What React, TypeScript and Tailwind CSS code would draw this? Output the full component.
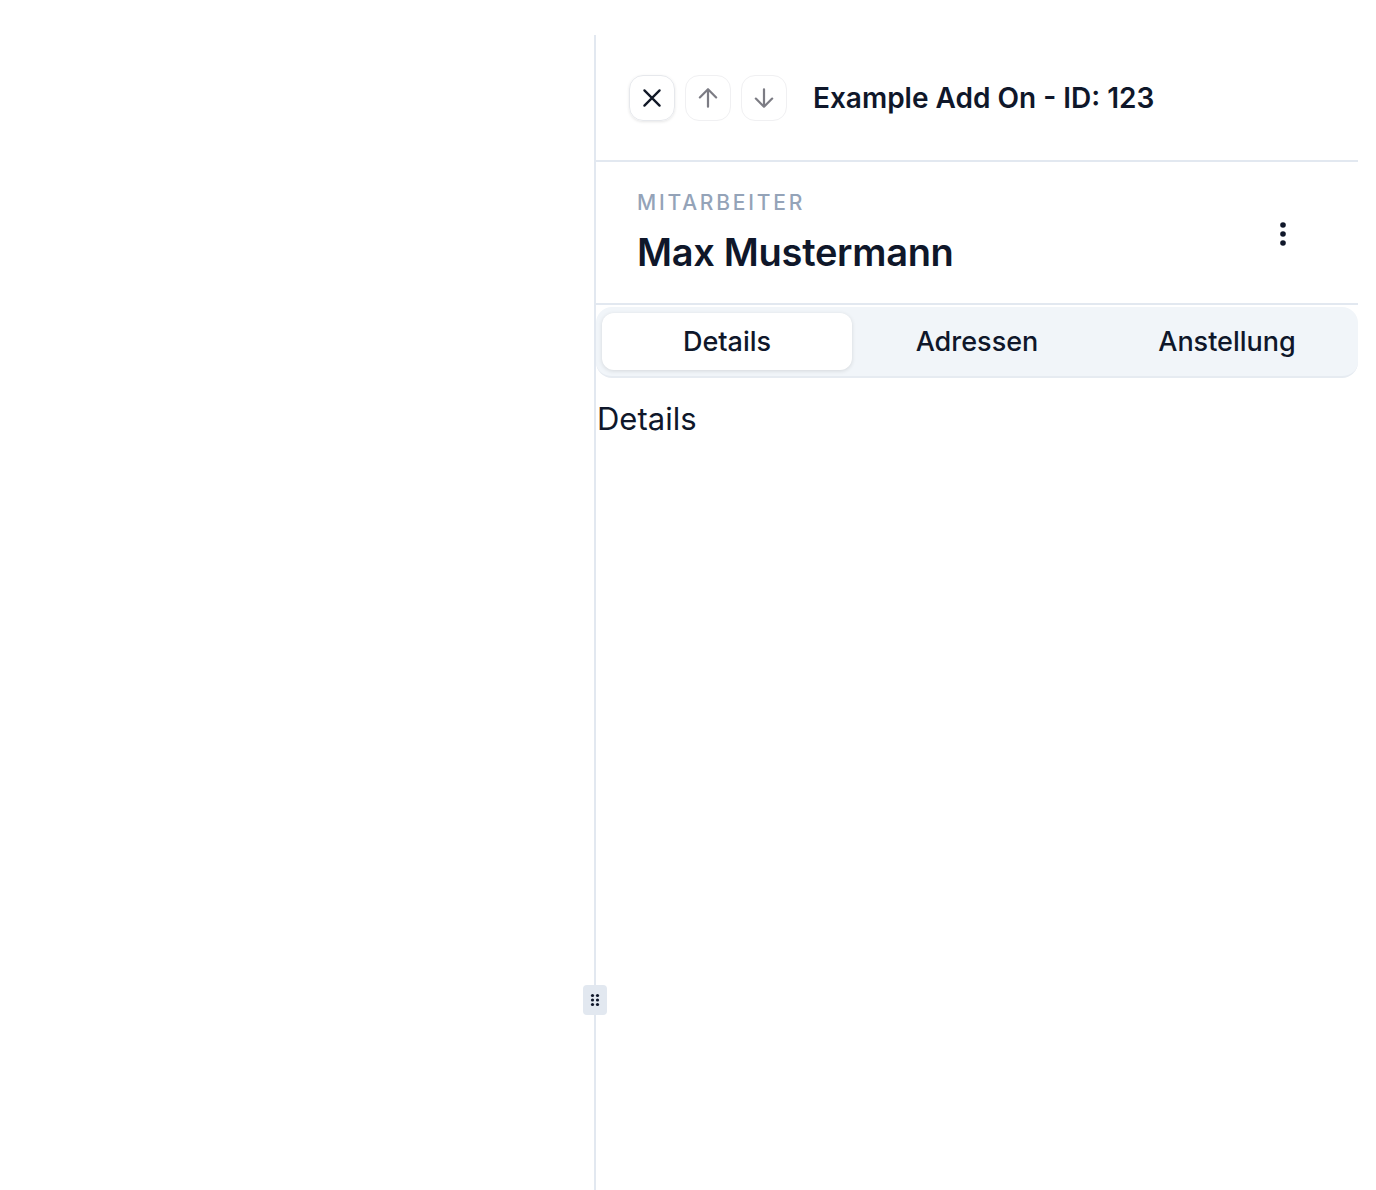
import React from "react";

function XIcon() {
  return (
    <svg width="28" height="28" viewBox="0 0 24 24" fill="none" stroke="#111827" strokeWidth="2" strokeLinecap="round">
      <path d="M5.5 5.5l13 13M18.5 5.5l-13 13" />
    </svg>
  );
}
function ArrowUp() {
  return (
    <svg width="28" height="28" viewBox="0 0 24 24" fill="none" stroke="#7c7c84" strokeWidth="1.9" strokeLinecap="round" strokeLinejoin="round">
      <path d="M12 19.5V4.5M5 11.5l7-7 7 7" />
    </svg>
  );
}
function ArrowDown() {
  return (
    <svg width="28" height="28" viewBox="0 0 24 24" fill="none" stroke="#7c7c84" strokeWidth="1.9" strokeLinecap="round" strokeLinejoin="round">
      <path d="M12 4.5v15M19 12.5l-7 7-7-7" />
    </svg>
  );
}

export default function App() {
  return (
    <div className="w-[1376px] h-[1190px] bg-white flex pt-[35px]" style={{ fontFamily: "Inter, 'Noto Sans', sans-serif" }}>
      <div className="w-[594px] shrink-0" />
      <div className="relative w-[764px] border-l-2 border-[#e2e8f0] flex flex-col">
        <div className="h-[127px] border-b-2 border-[#e2e8f0] flex items-center pl-[33px] pt-[1px]">
          <div className="flex gap-[10px]">
            <button className="w-[46px] h-[46px] rounded-[14px] border border-[#e6e8ec] shadow-[0_1px_3px_rgba(0,0,0,0.10)] flex items-center justify-center">
              <XIcon />
            </button>
            <button className="w-[46px] h-[46px] rounded-[14px] border border-[#f0f0f2] flex items-center justify-center">
              <ArrowUp />
            </button>
            <button className="w-[46px] h-[46px] rounded-[14px] border border-[#f0f0f2] flex items-center justify-center">
              <ArrowDown />
            </button>
          </div>
          <div className="ml-[26px] text-[28px] font-semibold text-[#0f172a]">Example Add On - ID: 123</div>
        </div>
        <div className="h-[143px] border-b-2 border-[#e2e8f0] flex items-center justify-between pl-[41px] pr-[71px]">
          <div className="flex flex-col">
            <div className="text-[21px] font-medium text-[#94a3b8] tracking-[2.8px] leading-[28px] mt-[0px]">MITARBEITER</div>
            <div className="text-[38px] font-semibold text-[#0f172a] leading-[50px] tracking-[-0.3px] mt-[10px]">Max Mustermann</div>
          </div>
          <svg width="8" height="26" viewBox="0 0 8 26" fill="#0f172a" className="mt-[2px]">
            <circle cx="4" cy="4" r="2.8" />
            <circle cx="4" cy="13" r="2.8" />
            <circle cx="4" cy="22" r="2.8" />
          </svg>
        </div>
        <div className="mt-[2px] h-[71px] bg-[#f1f5f9] rounded-[16px] border-b-2 border-[#e6ebf1] grid grid-cols-3 p-[6px]">
          <div className="bg-white rounded-[12px] shadow-[0_1px_4px_rgba(0,0,0,0.12)] flex items-center justify-center text-[27px] font-medium text-[#0f172a] pt-[1px]">Details</div>
          <div className="flex items-center justify-center text-[27px] font-medium text-[#0f172a] pt-[1px]">Adressen</div>
          <div className="flex items-center justify-center text-[27px] font-medium text-[#0f172a] pt-[1px]">Anstellung</div>
        </div>
        <div className="pl-[1px] mt-[19px] text-[31px] text-[#0f172a] leading-[44px]">Details</div>
        <div className="absolute left-[-13px] top-[950px] w-[24px] h-[30px] bg-[#e2e8f0] rounded-[4px] flex items-center justify-center">
          <svg width="10" height="14" viewBox="0 0 10 14" fill="#0f172a">
            <circle cx="2.5" cy="2.5" r="1.6" />
            <circle cx="7.5" cy="2.5" r="1.6" />
            <circle cx="2.5" cy="7" r="1.6" />
            <circle cx="7.5" cy="7" r="1.6" />
            <circle cx="2.5" cy="11.5" r="1.6" />
            <circle cx="7.5" cy="11.5" r="1.6" />
          </svg>
        </div>
      </div>
    </div>
  );
}
